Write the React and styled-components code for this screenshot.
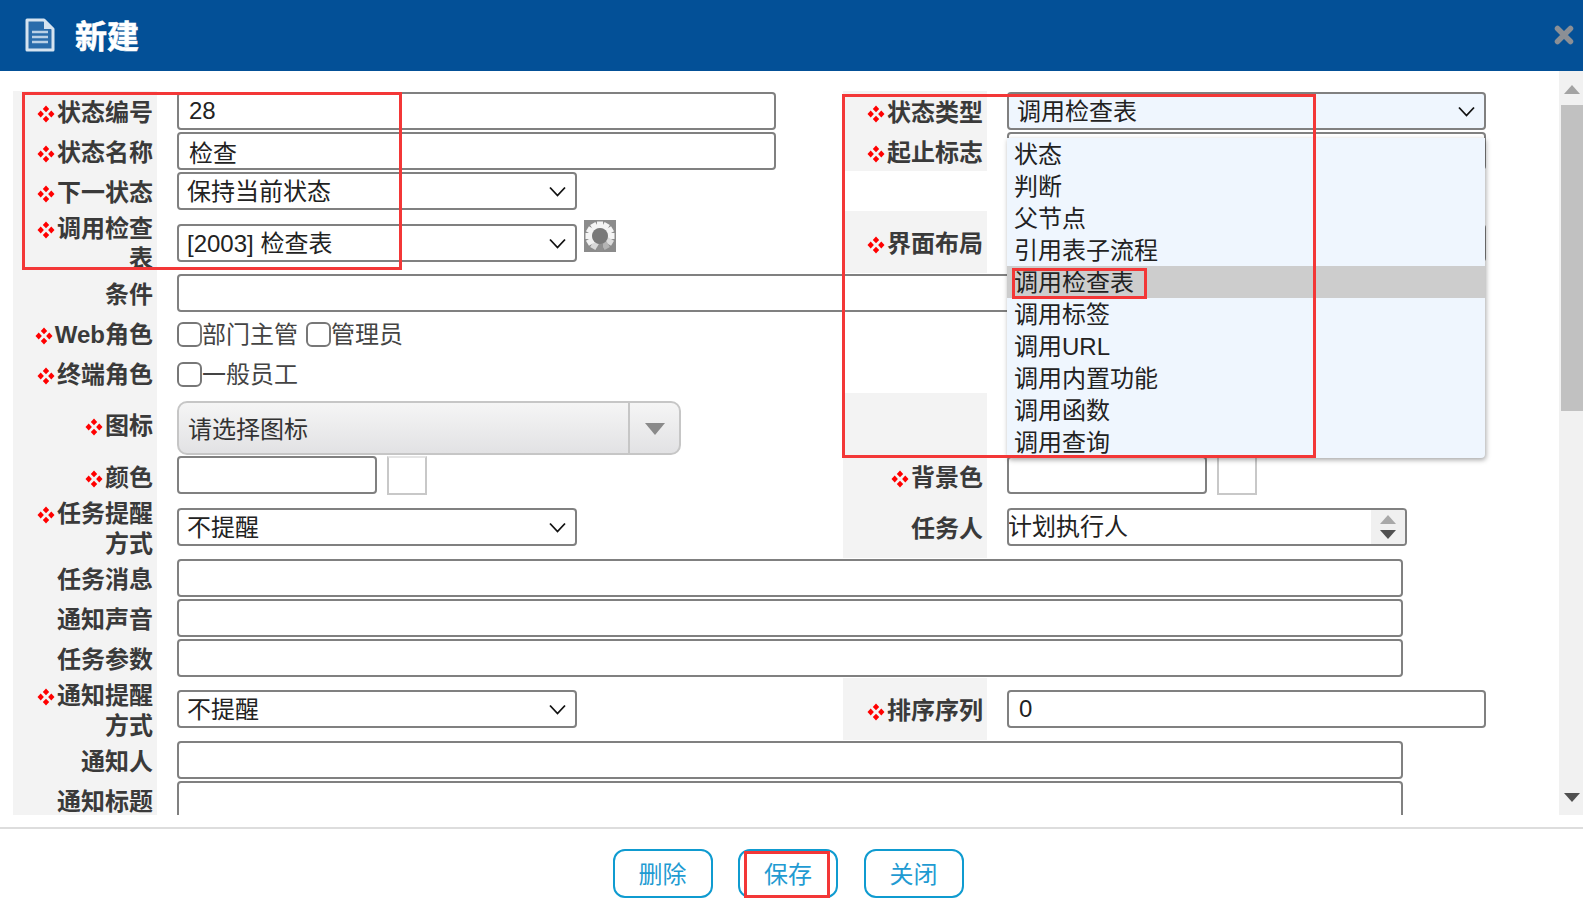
import React from 'react'
import styled, { createGlobalStyle } from 'styled-components'

const GlobalStyle = createGlobalStyle`
    html, body {
        margin: 0;
        padding: 0;
        background: #fff;
        overflow: hidden;
    }
    * {
        box-sizing: border-box;
    }
`;

const Page = styled.div`
    position: relative;
    width: 1583px;
    height: 907px;
    display: flex;
    flex-direction: column;
    font-family: "Liberation Sans", "Noto Sans CJK SC", sans-serif;
    font-size: 24px;
    color: #222;
    overflow: hidden;
`;

const TitleBar = styled.div`
    height: 71px;
    flex: none;
    background: #035097;
    display: flex;
    align-items: center;
    padding: 0 9px 2px 25px;
`;

const Title = styled.div`
    font-size: 32px;
    font-weight: 700;
    color: #fff;
    -webkit-text-stroke: 0.6px #fff;
    margin: 0 0 2px 20px;
    flex: 1;
`;

const Content = styled.div`
    height: 744px;
    flex: none;
    display: flex;
    overflow: hidden;
`;

const Form = styled.div`
    flex: 1;
    padding: 20px 0 0 13px;
    display: grid;
    grid-template-columns: 144px 686px 144px 1fr;
    grid-template-rows: 40px 40px 40px 62px 40px 40px 40px 63px 40px 62px 40px 40px 40px 62px 40px 40px;
`;

const Label = styled.div`
    background: #f3f3f3;
    font-weight: 700;
    color: #3a3a3a;
    line-height: 30px;
    text-align: right;
    padding: 3px 4px 0 20px;
    display: flex;
    align-items: center;
    justify-content: flex-end;
`;

const MarkIcon = styled.svg`
    width: 18px;
    height: 18px;
    margin-right: 2px;
    vertical-align: -2px;
`;

const Cell = styled.div`
    grid-column: span ${({ $span }) => $span || 1};
    padding: ${({ $top }) => $top || 0}px 0 0 20px;
    display: flex;
    align-items: ${({ $align }) => $align || 'center'};
    gap: ${({ $gap }) => $gap || 0}px;
`;

const TextInput = styled.input`
    width: ${({ $w }) => $w}px;
    height: 38px;
    border: 2px solid #808080;
    border-radius: 4px;
    background: #fff;
    font: inherit;
    color: #222;
    padding: 0 10px;
    outline: none;
`;

const SelectWrap = styled.div`
    position: relative;
    width: ${({ $w }) => $w}px;
    height: 38px;
`;

const Select = styled.select`
    appearance: none;
    width: 100%;
    height: 100%;
    border: 2px solid #808080;
    border-radius: 4px;
    background-color: ${({ $active }) => ($active ? '#eff6fe' : '#fff')};
    font: inherit;
    color: #222;
    padding: 0 30px 0 8px;
    outline: none;
`;

const Chevron = styled.svg`
    position: absolute;
    right: 11px;
    top: 14px;
    width: 17px;
    height: 11px;
    pointer-events: none;
`;

const CheckGroup = styled.label`
    display: flex;
    align-items: center;
    color: #444;
    margin-right: 8px;
    padding-bottom: 2px;
`;

const Check = styled.input`
    appearance: none;
    width: 25px;
    height: 25px;
    margin: 4px 0 0;
    border: 2px solid #777;
    border-radius: 6px;
    background: #fff;
`;

const IconCombo = styled.div`
    width: 504px;
    height: 54px;
    margin-bottom: 1px;
    border: 2px solid #c6c6c6;
    border-radius: 10px;
    background: linear-gradient(#f5f5f5, #e2e2e4);
    display: flex;
    align-items: center;
`;

const ComboText = styled.div`
    flex: 1;
    padding: 0 0 2px 9px;
    color: #333;
`;

const ComboArrow = styled.div`
    width: 51px;
    height: 100%;
    padding-top: 2px;
    border-left: 2px solid #c6c6c6;
    display: flex;
    align-items: center;
    justify-content: center;
`;

const Swatch = styled.div`
    width: 40px;
    height: 39px;
    border: 2px solid #c8c8c8;
    border-top-color: #e4e4e4;
    background: #fff;
`;

const ListBox = styled.div`
    width: 400px;
    height: 38px;
    border: 2px solid #808080;
    border-radius: 4px;
    background: #fff;
    display: flex;
    overflow: hidden;
`;

const ListText = styled.div`
    flex: 1;
    line-height: 34px;
    margin-left: -1px;
    color: #222;
`;

const Spinner = styled.div`
    width: 34px;
    background: #f0f0f0;
    display: flex;
    flex-direction: column;
    align-items: center;
    justify-content: center;
    gap: 6px;
`;

const SpinnerSlot = styled.div`
    align-self: flex-start;
    margin-top: 7px;
    height: 32px;
`;

const FieldAnchor = styled.div`
    position: relative;
`;

const OptionList = styled.div`
    position: absolute;
    top: 46px;
    left: 0;
    width: 478px;
    background: #eff6fe;
    border-radius: 0 0 4px 4px;
    box-shadow: 1px 2px 5px rgba(0, 0, 0, 0.35);
    z-index: 5;
`;

const Option = styled.div`
    position: relative;
    height: 32px;
    line-height: 34px;
    padding-left: 7px;
    color: #222;
    background: ${({ $selected }) => ($selected ? '#cdcdcd' : 'transparent')};
`;

const Scrollbar = styled.div`
    width: 24px;
    flex: none;
    background: #f1f1f1;
    display: flex;
    flex-direction: column;
    padding: 14px 0 13px 2px;
    align-items: stretch;
`;

const ScrollButton = styled.div`
    height: 9px;
    display: flex;
    justify-content: center;
`;

const Thumb = styled.div`
    height: 306px;
    margin: 11px 0 auto;
    background: #c1c1c1;
`;

const Divider = styled.div`
    height: 2px;
    flex: none;
    margin-top: 12px;
    background: #ddd;
`;

const Footer = styled.div`
    flex: 1;
    display: flex;
    justify-content: center;
    gap: 25.5px;
    padding: 20px 7px 0 0;
`;

const Button = styled.button`
    width: 100px;
    height: 49px;
    border: 2px solid #0f9bd0;
    border-radius: 12px;
    background: #fff;
    color: #1f9bd2;
    font: inherit;
    padding: 0 0 3px;
`;

const RedBox = styled.div`
    position: absolute;
    left: ${({ $x }) => $x}px;
    top: ${({ $y }) => $y}px;
    width: ${({ $w }) => $w}px;
    height: ${({ $h }) => $h}px;
    border: 3px solid #f33737;
    pointer-events: none;
    z-index: 10;
`;

const DocIcon = () => (
    <svg width="30" height="34" viewBox="0 0 30 34">
        <path d="M2 2h17l9 9v21H2z" fill="#2a6cab" stroke="#d5e3f0" strokeWidth="3" strokeLinejoin="round" />
        <path d="M19 3l8 8h-8z" fill="#d5e3f0" />
        <path d="M7 14h16M7 19h16M7 24h16" stroke="#b9d0e6" strokeWidth="2.6" />
    </svg>
);

const CloseIcon = () => (
    <svg width="20" height="20" viewBox="0 0 20 20">
        <path d="M3.5 3.5l13 13M16.5 3.5l-13 13" stroke="#8b8f95" strokeWidth="5.5" strokeLinecap="round" />
    </svg>
);

const LoadingIcon = () => {
    const shades = ['#f4f4f4', '#f4f4f4', '#f4f4f4', '#f4f4f4', '#dcdcdc', '#b4b4b4', '#8f8f8f', '#d8d8d8', '#f0f0f0', '#f4f4f4', '#f4f4f4', '#f4f4f4'];
    return (
        <svg width="32" height="32" viewBox="0 0 32 32">
            <rect width="32" height="32" fill="#8b8b8b" />
            {shades.map((shade, index) => (
                <path
                    key={index}
                    d="M16 1.5v7"
                    stroke={shade}
                    strokeWidth="6"
                    transform={`rotate(${index * 30} 16 16)`}
                />
            ))}
            <circle cx="16" cy="16" r="8" fill="#797979" />
        </svg>
    );
};

const Triangle = ({ up, color, w = 16, h = 9 }) => (
    <svg width={w} height={h} viewBox="0 0 16 9" preserveAspectRatio="none">
        <path d={up ? 'M8 0l8 9H0z' : 'M0 0h16L8 9z'} fill={color} />
    </svg>
);

const Mark = () => (
    <MarkIcon viewBox="0 0 18 18">
        <path d="M9 0.5l3.2 3.4L9 7.3 5.8 3.9zM3.7 5.6l3.2 3.4-3.2 3.4L0.5 9zM14.3 5.6l3.2 3.4-3.2 3.4L11.1 9zM9 10.7l3.2 3.4L9 17.5l-3.2-3.4z" fill="#f00" />
    </MarkIcon>
);

const FieldLabel = ({ mark, children }) => (
    <Label>
        <div>
            {mark && <Mark />}
            {children}
        </div>
    </Label>
);

const SelectField = ({ w, active, value }) => (
    <SelectWrap $w={w}>
        <Select $active={active} defaultValue={value}>
            <option>{value}</option>
        </Select>
        <Chevron viewBox="0 0 17 11">
            <path d="M1 1.5l7.5 8 7.5-8" fill="none" stroke="#111" strokeWidth="1.8" />
        </Chevron>
    </SelectWrap>
);

const statusTypes = ['状态', '判断', '父节点', '引用表子流程', '调用检查表', '调用标签', '调用URL', '调用内置功能', '调用函数', '调用查询'];

const FULL = 1226;

const App = () => {
    return (
        <Page>
            <GlobalStyle />
            <TitleBar>
                <DocIcon />
                <Title>新建</Title>
                <CloseIcon />
            </TitleBar>

            <Content>
                <Form>
                    <FieldLabel mark>状态编号</FieldLabel>
                    <Cell><TextInput $w={599} defaultValue="28" /></Cell>
                    <FieldLabel mark>状态类型</FieldLabel>
                    <Cell>
                        <FieldAnchor>
                            <SelectField w={479} active value="调用检查表" />
                            <OptionList>
                                {statusTypes.map((type) => (
                                    <Option key={type} $selected={type === '调用检查表'}>
                                        {type}
                                        {type === '调用检查表' && <RedBox $x={5} $y={2} $w={135} $h={31} />}
                                    </Option>
                                ))}
                            </OptionList>
                        </FieldAnchor>
                    </Cell>

                    <FieldLabel mark>状态名称</FieldLabel>
                    <Cell><TextInput $w={599} defaultValue="检查" /></Cell>
                    <FieldLabel mark>起止标志</FieldLabel>
                    <Cell><TextInput $w={479} /></Cell>

                    <FieldLabel mark>下一状态</FieldLabel>
                    <Cell><SelectField w={400} value="保持当前状态" /></Cell>
                    <Cell $span={2} />

                    <FieldLabel mark>调用检查表</FieldLabel>
                    <Cell $gap={7} $top={2}>
                        <SelectField w={400} value="[2003] 检查表" />
                        <SpinnerSlot><LoadingIcon /></SpinnerSlot>
                    </Cell>
                    <FieldLabel mark>界面布局</FieldLabel>
                    <Cell $top={2}><TextInput $w={479} /></Cell>

                    <FieldLabel>条件</FieldLabel>
                    <Cell $span={3}><TextInput $w={FULL} /></Cell>

                    <FieldLabel mark>Web角色</FieldLabel>
                    <Cell $span={3}>
                        <CheckGroup><Check type="checkbox" />部门主管</CheckGroup>
                        <CheckGroup><Check type="checkbox" />管理员</CheckGroup>
                    </Cell>

                    <FieldLabel mark>终端角色</FieldLabel>
                    <Cell $span={3}>
                        <CheckGroup><Check type="checkbox" />一般员工</CheckGroup>
                    </Cell>

                    <FieldLabel mark>图标</FieldLabel>
                    <Cell $align="flex-end">
                        <IconCombo>
                            <ComboText>请选择图标</ComboText>
                            <ComboArrow><Triangle color="#8a8a8a" w={20} h={12} /></ComboArrow>
                        </IconCombo>
                    </Cell>
                    <Label />
                    <Cell />

                    <FieldLabel mark>颜色</FieldLabel>
                    <Cell $gap={10} $align="flex-start">
                        <TextInput $w={200} />
                        <Swatch />
                    </Cell>
                    <FieldLabel mark>背景色</FieldLabel>
                    <Cell $gap={10} $align="flex-start">
                        <TextInput $w={200} />
                        <Swatch />
                    </Cell>

                    <FieldLabel mark>任务提醒方式</FieldLabel>
                    <Cell><SelectField w={400} value="不提醒" /></Cell>
                    <FieldLabel>任务人</FieldLabel>
                    <Cell>
                        <ListBox>
                            <ListText>计划执行人</ListText>
                            <Spinner>
                                <Triangle up color="#a8a8a8" />
                                <Triangle color="#505050" />
                            </Spinner>
                        </ListBox>
                    </Cell>

                    <FieldLabel>任务消息</FieldLabel>
                    <Cell $span={3}><TextInput $w={FULL} /></Cell>
                    <FieldLabel>通知声音</FieldLabel>
                    <Cell $span={3}><TextInput $w={FULL} /></Cell>
                    <FieldLabel>任务参数</FieldLabel>
                    <Cell $span={3}><TextInput $w={FULL} /></Cell>

                    <FieldLabel mark>通知提醒方式</FieldLabel>
                    <Cell><SelectField w={400} value="不提醒" /></Cell>
                    <FieldLabel mark>排序序列</FieldLabel>
                    <Cell><TextInput $w={479} defaultValue="0" /></Cell>

                    <FieldLabel>通知人</FieldLabel>
                    <Cell $span={3}><TextInput $w={FULL} /></Cell>
                    <FieldLabel>通知标题</FieldLabel>
                    <Cell $span={3}><TextInput $w={FULL} /></Cell>
                </Form>

                <Scrollbar>
                    <ScrollButton><Triangle up color="#a3a3a3" /></ScrollButton>
                    <Thumb />
                    <ScrollButton><Triangle color="#505050" /></ScrollButton>
                </Scrollbar>
            </Content>

            <Divider />
            <Footer>
                <Button>删除</Button>
                <Button>保存</Button>
                <Button>关闭</Button>
            </Footer>

            <RedBox $x={22} $y={92} $w={380} $h={178} />
            <RedBox $x={842} $y={94} $w={474} $h={364} />
            <RedBox $x={744} $y={851} $w={86} $h={47} />
        </Page>
    )
}

export default App
